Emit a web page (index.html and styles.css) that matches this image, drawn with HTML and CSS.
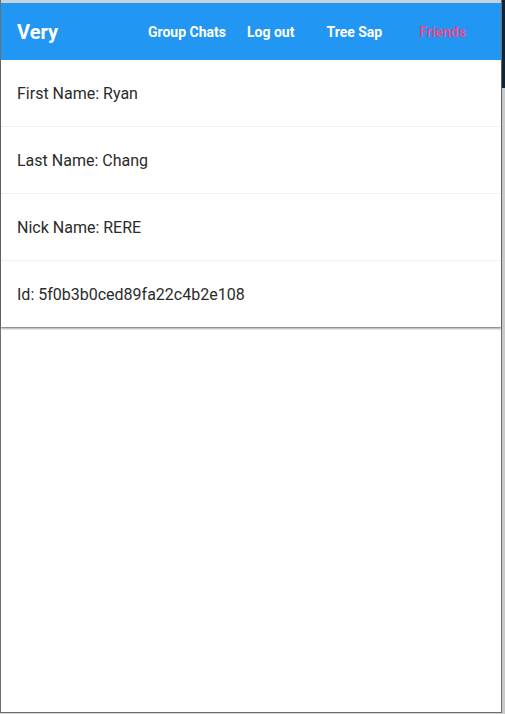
FILE: index.html
```html
<!DOCTYPE html>
<html>
<head>
<meta charset="utf-8">
<link rel="stylesheet" href="styles.css">
</head>
<body>
<div class="screen">
  <div class="window">
    <div class="topstrip"></div>
    <header class="toolbar">
      <span class="brand">Very</span>
      <nav class="nav">
        <a class="nav-link gc">Group Chats</a>
        <a class="nav-link lo">Log out</a>
        <a class="nav-link ts">Tree Sap</a>
        <a class="nav-link fr active">Friends</a>
      </nav>
    </header>
    <main class="card">
      <div class="row">First Name: Ryan</div>
      <div class="row">Last Name: Chang</div>
      <div class="row">Nick Name: RERE</div>
      <div class="row">Id: 5f0b3b0ced89fa22c4b2e108</div>
    </main>
  </div>
  <div class="backdrop"></div>
</div>
</body>
</html>
```
FILE: styles.css
```css
html, body {
  margin: 0;
  padding: 0;
  height: 714px;
  overflow: hidden;
  background: #d6d6d6;
  font-family: Roboto, "Liberation Sans", sans-serif;
}
.screen {
  display: flex;
  height: 714px;
}
.window {
  width: 500px;
  height: 712px;
  border-left: 1px solid #6e6e6e;
  border-right: 1px solid #6e6e6e;
  border-bottom: 1px solid #6e6e6e;
  background: #fff;
  display: flex;
  flex-direction: column;
}
.backdrop {
  flex: 1;
  background: linear-gradient(#0f2438 0, #0f2438 88px, #c8c8c8 88px, #c8c8c8 100%);
}
.topstrip {
  height: 3px;
  background: #c4d2dc;
}
.toolbar {
  height: 57px;
  background: #2196f3;
  display: flex;
  align-items: center;
  padding-left: 16px;
  color: #fff;
}
.brand {
  font-size: 20px;
  font-weight: 700;
  width: 131px;
}
.nav {
  display: flex;
  align-items: center;
}
.nav-link {
  font-size: 14px;
  font-weight: 700;
  color: #fff;
}
.gc { margin-right: 21px; }
.lo { margin-right: 32px; }
.ts { margin-right: 37px; }
.active {
  color: #ff4081;
  font-weight: 500;
}
.card {
  background: #fff;
  box-shadow: 0 2px 2px rgba(0,0,0,0.3), 0 1px 1px rgba(0,0,0,0.2);
}
.row {
  height: 66px;
  display: flex;
  align-items: center;
  padding-left: 16px;
  font-size: 16px;
  color: #2b2b2b;
  border-top: 1px solid #f0f0f0;
}
.row:first-child {
  border-top: none;
}
```
